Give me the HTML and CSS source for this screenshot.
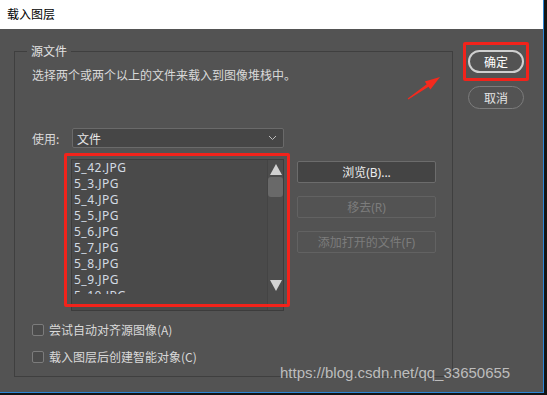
FILE: index.html
```html
<!DOCTYPE html>
<html lang="zh-CN">
<head>
    <meta charset="UTF-8">
    <title>载入图层</title>
    <link rel="stylesheet" href="styles.css">
</head>
<body>
    <div class="window">
        <div class="titlebar">载入图层</div>
        <div class="dialog">
            <fieldset class="source">
                <legend>源文件</legend>
                <div class="source-body">
                    <p class="hint">选择两个或两个以上的文件来载入到图像堆栈中。</p>
                    <div class="use-row">
                        <span class="label">使用:</span>
                        <div class="select">
                            <span>文件</span>
                            <svg class="chevron" width="9" height="6" viewBox="0 0 9 6"><polyline points="1,1 4.5,4.5 8,1" fill="none" stroke="#bcbcbc" stroke-width="1"/></svg>
                        </div>
                    </div>
                    <div class="files-row">
                        <div class="file-list">
                            <ul class="files">
                                <li>5_42.JPG</li>
                                <li>5_3.JPG</li>
                                <li>5_4.JPG</li>
                                <li>5_5.JPG</li>
                                <li>5_6.JPG</li>
                                <li>5_7.JPG</li>
                                <li>5_8.JPG</li>
                                <li>5_9.JPG</li>
                                <li>5_10.JPG</li>
                            </ul>
                            <div class="scrollbar">
                                <svg class="arrow-btn" width="12" height="11" viewBox="0 0 12 11"><polygon points="6,0 12,11 0,11" fill="#d2d2d2"/></svg>
                                <div class="thumb"></div>
                                <div class="track"></div>
                                <svg class="arrow-btn" width="12" height="11" viewBox="0 0 12 11"><polygon points="0,0 12,0 6,11" fill="#d2d2d2"/></svg>
                            </div>
                            <div class="mark mark-list"></div>
                        </div>
                        <div class="file-buttons">
                            <button class="btn">浏览(B)...</button>
                            <button class="btn disabled">移去(R)</button>
                            <button class="btn disabled">添加打开的文件(F)</button>
                        </div>
                    </div>
                    <label class="check"><span class="box"></span>尝试自动对齐源图像(A)</label>
                    <label class="check"><span class="box"></span>载入图层后创建智能对象(C)</label>
                </div>
            </fieldset>
            <div class="actions">
                <div class="ok-wrap">
                    <button class="pill primary">确定</button>
                    <div class="mark mark-ok"></div>
                </div>
                <button class="pill">取消</button>
            </div>
            <svg class="pointer" width="543" height="363" viewBox="0 0 543 363">
                <polygon points="440,48 430.4,60.6 428.5,57.7 408.3,70.5 407.7,69.5 426.7,55.3 424.8,52.4" fill="#f42a1e"/>
            </svg>
            <div class="watermark">https://blog.csdn.net/qq_33650655</div>
        </div>
    </div>
</body>
</html>
```

FILE: styles.css
```css
body {
    margin: 0;
    padding: 0;
    background-color: #141414;
    font-family: "Noto Sans", "Noto Sans CJK SC", sans-serif;
    font-size: 12px;
}
.window {
    width: 543px;
    border-right: 1px solid #2c86d6;
    border-bottom: 1px solid #2c86d6;
}
.titlebar {
    height: 29px;
    line-height: 28px;
    padding-left: 7px;
    background-color: #fff;
    color: #000;
    font-family: "Noto Sans CJK SC", sans-serif;
}
.dialog {
    position: relative;
    display: flex;
    align-items: flex-start;
    height: 363px;
    box-sizing: border-box;
    padding: 14px 19px 0 14px;
    background-color: #535353;
    color: #d9d9d9;
}
.source {
    width: 439px;
    height: 334px;
    box-sizing: border-box;
    margin: 0;
    padding: 0;
    border: 1px solid #3f3f3f;
}
.source legend {
    margin-left: 12px;
    padding: 0 4px;
    line-height: 16px;
    color: #e2e2e2;
    font-family: "Noto Sans CJK SC", sans-serif;
}
.source-body {
    padding-left: 17px;
}
.hint {
    margin: 8px 0 0;
    line-height: 16px;
    font-family: "Noto Sans CJK SC", sans-serif;
}
.use-row {
    display: flex;
    align-items: center;
    margin-top: 45px;
    height: 20px;
}
.label {
    width: 40px;
    font-family: "Noto Sans CJK SC", sans-serif;
}
.select {
    display: flex;
    align-items: center;
    justify-content: space-between;
    width: 212px;
    height: 20px;
    box-sizing: border-box;
    padding: 0 6px 0 4px;
    border: 1px solid #6a6a6a;
    border-radius: 2px;
    background-color: #464646;
    color: #e8e8e8;
    font-family: "Noto Sans CJK SC", sans-serif;
}
.files-row {
    display: flex;
    align-items: flex-start;
    gap: 13px;
    margin-top: 11px;
    margin-left: 39px;
}
.file-list {
    position: relative;
    display: flex;
    width: 213px;
    height: 152px;
    box-sizing: border-box;
    border: 1px solid #3c3c3c;
    background-color: #4a4a4a;
}
.files {
    flex: 1;
    height: 134px;
    overflow: hidden;
    margin: 0;
    padding: 0 0 0 2px;
    list-style: none;
    color: #d3dbe3;
    letter-spacing: 0.5px;
}
.files li {
    line-height: 16px;
}
.scrollbar {
    display: flex;
    flex-direction: column;
    align-items: center;
    width: 16px;
    padding-top: 4px;
    box-sizing: border-box;
    border-left: 1px solid #444;
    background-color: #4d4d4d;
}
.thumb {
    width: 15px;
    height: 20px;
    margin-top: 2px;
    border-radius: 3px;
    background-color: #696969;
}
.track {
    height: 83px;
}
.mark {
    position: absolute;
    border: 3px solid #f2231b;
    border-radius: 2px;
    pointer-events: none;
}
.mark-list {
    left: -8px;
    top: -7px;
    width: 220px;
    height: 148px;
}
.file-buttons {
    display: flex;
    flex-direction: column;
    gap: 13px;
    padding-top: 2px;
}
.btn {
    width: 139px;
    height: 22px;
    padding: 0;
    border: 1px solid #6c6c6c;
    border-radius: 2px;
    background-color: #444;
    color: #ececec;
    font-family: "Noto Sans", "Noto Sans CJK SC", sans-serif;
    font-size: 12px;
}
.btn.disabled {
    border-color: #626262;
    background-color: #535353;
    color: #7c7c7c;
}
.check {
    display: flex;
    align-items: center;
    gap: 5px;
    line-height: 16px;
    margin-top: 11px;
    font-family: "Noto Sans CJK SC", sans-serif;
}
.check + .check {
    margin-top: 11px;
}
.box {
    width: 12px;
    height: 12px;
    box-sizing: border-box;
    border: 1px solid #7c7c7c;
    border-radius: 2px;
    background-color: #4b4b4b;
}
.actions {
    display: flex;
    flex-direction: column;
    gap: 13px;
    margin: 7px 0 0 15px;
}
.ok-wrap {
    position: relative;
}
.pill {
    display: block;
    width: 56px;
    height: 23px;
    padding: 0;
    border: 1px solid #7c7c7c;
    border-radius: 12px;
    background-color: transparent;
    color: #e4e4e4;
    font-family: "Noto Sans CJK SC", sans-serif;
    font-size: 12px;
}
.pill.primary {
    border: 2px solid #cfcfcf;
    color: #fff;
}
.mark-ok {
    left: -5px;
    top: -8px;
    right: -5px;
    bottom: -8px;
}
.pointer {
    position: absolute;
    left: 0;
    top: 0;
    pointer-events: none;
}
.watermark {
    position: absolute;
    left: 280px;
    top: 335px;
    font-family: "Liberation Sans", Arial, sans-serif;
    font-size: 15px;
    line-height: 17px;
    color: #bdbdbd;
}
```
